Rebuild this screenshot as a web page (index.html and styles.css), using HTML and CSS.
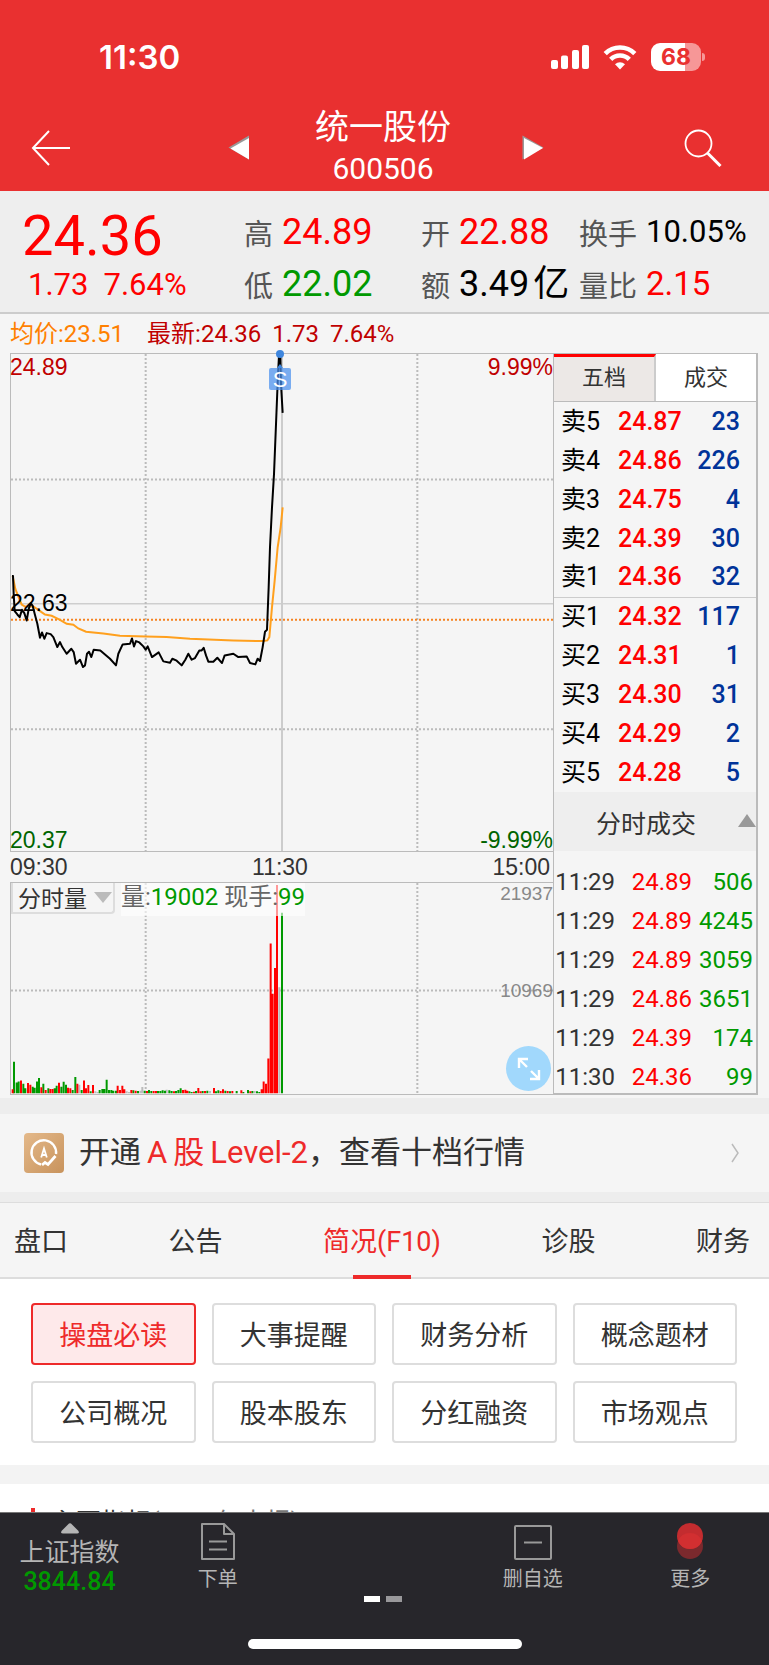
FILE: index.html
```html
<!DOCTYPE html>
<html lang="zh-CN">
<head>
<meta charset="utf-8">
<meta name="viewport" content="width=device-width, initial-scale=1">
<title>统一股份 600506</title>
<link rel="stylesheet" href="styles.css">
</head>
<body>
<div class="app">
  <header class="header">
    <div class="status">
      <time class="clock">11:30</time>
      <div class="status-icons">
        <svg width="38" height="25" viewBox="0 0 38 25" fill="#fff" aria-hidden="true"><rect x="0" y="15" width="7" height="9" rx="2"/><rect x="10" y="10.500" width="7" height="13.500" rx="2"/><rect x="21" y="5" width="7" height="19" rx="2"/><rect x="31" y="0" width="7" height="24" rx="2"/></svg>
        <svg class="wifi" width="34" height="25" viewBox="0 0 34 25" fill="none" stroke="#fff" stroke-width="4.600" aria-hidden="true"><path d="M2.200 8.600a21 21 0 0 1 29.600 0"/><path d="M7.700 14.400a13.200 13.200 0 0 1 18.600 0"/><path d="M17 24.500l-5-5.200a7.200 7.200 0 0 1 10 0z" fill="#fff" stroke="none"/></svg>
        <div class="battery">68</div>
      </div>
    </div>
    <nav class="nav">
      <button class="icon-btn" aria-label="返回"><svg width="40" height="36" viewBox="0 0 40 36" fill="none" stroke="#fff" stroke-width="2"><path d="M18 1L2 18l16 17M2 18h37"/></svg></button>
      <button class="icon-btn prev" aria-label="上一只"><svg width="22" height="25" viewBox="0 0 22 25"><path d="M21 0.500v24L0.500 12.500z" fill="#999"/><path d="M21 3v21.500L2.500 13.500z" fill="#fff"/></svg></button>
      <div class="title"><h1>统一股份</h1><span>600506</span></div>
      <button class="icon-btn next" aria-label="下一只"><svg width="22" height="25" viewBox="0 0 22 25"><path d="M0.500 0.500v24L21.500 12.500z" fill="#999"/><path d="M2 3v21.500L21 13z" fill="#fff"/></svg></button>
      <button class="icon-btn" aria-label="搜索"><svg width="38" height="38" viewBox="0 0 38 38" fill="none" stroke="#fff"><circle cx="14.500" cy="14.500" r="13" stroke-width="1.800"/><path d="M23.500 24l13 13" stroke-width="3"/></svg></button>
    </nav>
  </header>

  <main class="main">
    <section class="quote">
      <div class="last"><strong>24.36</strong><span>1.73</span><span>7.64%</span></div>
      <dl class="stat"><dt>高</dt><dd class="up">24.89</dd><dt>低</dt><dd class="down">22.02</dd></dl>
      <dl class="stat"><dt>开</dt><dd class="up">22.88</dd><dt>额</dt><dd>3.49<span class="unit">亿</span></dd></dl>
      <dl class="stat"><dt>换手</dt><dd class="small">10.05%</dd><dt>量比</dt><dd class="up mid">2.15</dd></dl>
    </section>

    <section class="trend">
      <div class="legend"><span class="avg">均价:23.51</span><span>最新:24.36</span><span>1.73</span><span>7.64%</span></div>
      <div class="board">
        <div class="charts">
          <div class="price-chart">
            <svg viewBox="33 39 1626 1494" preserveAspectRatio="none" aria-hidden="true">
              <path class="dots" d="M33 416H1659M33 1167H1659M437 39V1533M1252 39V1533"/>
              <path class="rule" d="M33 790H1659"/>
              <path class="rule noon" d="M846 39V1533"/>
              <path class="base" d="M33 838H1659"/>
              <path class="line-avg" d="M38 706L46 745 55 768 65 792 75 798 100 798 115 808 135 822 155 826 180 838 200 850 220 853 235 864 258 874 310 879 360 886 437 888 500 890 570 895 700 900 790 902 802 900 808 890 816 800 824 720 833 620 842 560 848 500"/>
              <path class="line-price" d="M36 706L39 706 41 760 44 812 52 822 59 830 66 808 73 818 80 840 86 806 92 788 98 796 104 820 112 850 120 892 126 876 133 895 140 878 152 881 160 890 172 920 180 905 187 920 200 940 214 925 221 935 228 970 240 958 249 980 255 975 261 940 267 934 274 950 281 928 301 930 315 942 330 955 348 975 355 940 368 912 390 910 396 894 402 918 408 902 418 906 430 918 437 928 443 918 456 950 476 936 490 963 510 967 517 955 530 961 545 975 556 958 565 940 575 958 585 953 598 930 605 930 611 922 618 945 625 964 640 964 652 952 666 968 674 945 700 940 715 950 740 948 750 968 766 972 773 955 780 962 788 920 795 874 801 868 806 740 810 620 816 500 822 400 828 250 834 100 837 44 841 44 843 130 848 216"/>
            </svg>
            <span class="lab tl">24.89</span><span class="lab tr">9.99%</span>
            <span class="lab ml">22.63</span>
            <span class="lab bl">20.37</span><span class="lab br">-9.99%</span>
            <span class="marker">S</span>
          </div>
          <div class="times"><span>09:30</span><span>11:30</span><span>15:00</span></div>
          <div class="vol-chart">
            <svg viewBox="33 306 1626 636" preserveAspectRatio="none" aria-hidden="true">
              <path class="dots" d="M33 630H1659M437 306V942M1252 306V942"/>
              <path class="bar g3" d="M238 940V914M286 940V934M293 940V936M380 940V934M387 940V936M427 940V921M421 940V932M500 940V929M630 940V933M764 940V933M838 940V620"/>
              <path class="bar g1" d="M42 940V845M50 940V907M56 940V904M70 940V911M76 940V925M98 940V920M104 940V923M111 940V904M117 940V894M130 940V911M145 940V925M164 940V925M170 940V917M184 940V920M191 940V905M198 940V914M218 940V930M226 940V891M245 940V930M272 940V934M299 940V930M307 940V927M313 940V927M320 940V899M327 940V930M334 940V930M340 940V932M348 940V932M400 940V931M414 940V933M434 940V932M447 940V930M454 940V933M474 940V933M481 940V933M488 940V931M495 940V932M508 940V931M515 940V933M528 940V933M535 940V930M542 940V925M568 940V934M575 940V936M588 940V933M608 940V933M622 940V932M648 940V934M655 940V931M676 940V932M690 940V934M710 940V933M730 940V936M744 940V930M757 940V933M771 940V934M778 940V936"/>
              <path class="bar r1" d="M38 940V928M63 940V901M84 940V909M91 940V914M124 940V922M137 940V930M151 940V927M158 940V927M177 940V908M204 940V923M211 940V925M232 940V911M252 940V901M258 940V925M265 940V915M279 940V915M353 940V917M360 940V930M367 940V917M373 940V928M394 940V930M407 940V932M441 940V933M461 940V933M468 940V933M522 940V934M549 940V930M556 940V929M562 940V932M582 940V935M595 940V924M602 940V934M615 940V933M642 940V924M662 940V933M669 940V928M683 940V933M697 940V933M724 940V931M751 940V934M785 940V928M791 940V904M798 940V911M805 940V835M812 940V488M818 940V640M825 940V562M831 940V312"/>
              <path class="bar g1" d="M846 940V396"/>
            </svg>
            <div class="vol-tools">
              <label class="picker"><select aria-label="指标"><option>分时量</option></select></label>
              <div class="vol-read">量:<b>19002</b> 现手:<b>99</b></div>
            </div>
            <span class="lab vol tr">21937</span><span class="lab vol mr">10969</span>
            <button class="expand" aria-label="全屏"><svg width="24" height="24" viewBox="0 0 24 24" fill="none" stroke="#fff" stroke-width="2.400"><path d="M2 11V2h9M2 2l8 8M22 13v9h-9M22 22l-8-8"/></svg></button>
          </div>
        </div>

        <aside class="book">
          <div class="book-tabs"><button class="on">五档</button><button>成交</button></div>
          <table class="levels">
            <tbody>
              <tr><th>卖5</th><td>24.87</td><td>23</td></tr>
              <tr><th>卖4</th><td>24.86</td><td>226</td></tr>
              <tr><th>卖3</th><td>24.75</td><td>4</td></tr>
              <tr><th>卖2</th><td>24.39</td><td>30</td></tr>
              <tr><th>卖1</th><td>24.36</td><td>32</td></tr>
            </tbody>
            <tbody class="bids">
              <tr><th>买1</th><td>24.32</td><td>117</td></tr>
              <tr><th>买2</th><td>24.31</td><td>1</td></tr>
              <tr><th>买3</th><td>24.30</td><td>31</td></tr>
              <tr><th>买4</th><td>24.29</td><td>2</td></tr>
              <tr><th>买5</th><td>24.28</td><td>5</td></tr>
            </tbody>
          </table>
          <button class="ticks-head"><span>分时成交</span><i class="tri-up"></i></button>
          <table class="ticks">
            <tbody>
              <tr><td>11:29</td><td>24.89</td><td>506</td></tr>
              <tr><td>11:29</td><td>24.89</td><td>4245</td></tr>
              <tr><td>11:29</td><td>24.89</td><td>3059</td></tr>
              <tr><td>11:29</td><td>24.86</td><td>3651</td></tr>
              <tr><td>11:29</td><td>24.39</td><td>174</td></tr>
              <tr><td>11:30</td><td>24.36</td><td>99</td></tr>
            </tbody>
          </table>
        </aside>
      </div>
    </section>

    <a class="promo" href="#level2">
      <svg width="40" height="40" viewBox="0 0 40 40" aria-hidden="true"><defs><linearGradient id="gold" x1="0" y1="0" x2="1" y2="1"><stop offset="0" stop-color="#e4b98a"/><stop offset="1" stop-color="#c8935c"/></linearGradient></defs><rect width="40" height="40" rx="4" fill="url(#gold)"/><g fill="none" stroke="#fff" stroke-width="2.400"><path d="M17 31.500A12.300 12.300 0 1 1 32 21"/><path d="M18 32l3-2.500 3 2L31.500 23" stroke-width="2.800"/><path d="M17.200 24.500L20 15.500l2.800 9M18 22h4" stroke-width="1.800"/></g></svg>
      <span>开通<em><i>A</i>股<i>Level-2</i></em>，查看十档行情</span>
      <svg class="chev" width="8" height="20" viewBox="0 0 8 20" fill="none" stroke="#bbb" stroke-width="1.500" aria-hidden="true"><path d="M1 1l6 9-6 9"/></svg>
    </a>

    <nav class="tabs"><a href="#a">盘口</a><a href="#b">公告</a><a href="#c" class="on">简况(F10)</a><a href="#d">诊股</a><a href="#e">财务</a></nav>

    <section class="chips">
      <button class="on">操盘必读</button><button>大事提醒</button><button>财务分析</button><button>概念题材</button>
      <button>公司概况</button><button>股本股东</button><button>分红融资</button><button>市场观点</button>
    </section>

    <section class="metrics"><h2>主要指标<small>(2025年中报)</small></h2></section>
  </main>

  <footer class="footer">
    <div class="dock">
      <a class="index" href="#sh"><svg width="18" height="11" viewBox="0 0 18 11" fill="#b5b5b5" aria-hidden="true"><path d="M8 .500q1-.600 2 0L17.500 8q1 2.500-1.500 2.500H2Q-.500 10.500.500 8z"/></svg><span>上证指数</span><b>3844.84</b></a>
      <a class="item" href="#order"><svg width="36" height="38" viewBox="0 0 36 38" fill="none" stroke="#999" stroke-width="2" stroke-linejoin="round" aria-hidden="true"><path d="M24 1H2v35h32V11L24 1v10h10M9 18.500h18M9 26.500h18"/></svg><span>下单</span></a>
      <div class="item"></div>
      <a class="item" href="#remove"><svg width="38" height="38" viewBox="0 0 38 38" fill="none" stroke="#999" stroke-width="2" aria-hidden="true"><rect x="1" y="3" width="36" height="33" rx="1"/><path d="M10 19.500h18"/></svg><span>删自选</span></a>
      <a class="item" href="#more"><svg width="28" height="38" viewBox="0 0 28 38" aria-hidden="true"><circle cx="14" cy="23" r="13" fill="#7b292d"/><circle cx="14" cy="13" r="13" fill="#c32c2f"/><path d="M2 18a13 13 0 0 1 24 0A13 13 0 0 1 2 18z" fill="#d22f31"/></svg><span>更多</span></a>
    </div>
    <div class="pager"><i class="on"></i><i></i></div>
    <div class="home"></div>
  </footer>
</div>
</body>
</html>
```

FILE: styles.css
```css
* { box-sizing: border-box; }
body, h1, h2, dl, dd { margin: 0; }
body { font-family: Roboto, "Noto Sans CJK SC", sans-serif; color: #333; background: #eee; }
button { font: inherit; color: inherit; background: none; border: 0; padding: 0; }
a { color: inherit; text-decoration: none; }
svg { display: block; flex: none; }
.app { display: flex; flex-direction: column; height: 100vh; overflow: hidden; }

.header { background: #e93030; color: #fff; padding: 36px 0 0; }
.status { display: flex; justify-content: space-between; align-items: center; height: 42px; padding: 0 68px 0 99px; }
.clock { font: 600 33px/42px Inter, sans-serif; }
.status-icons { display: flex; align-items: center; gap: 14px; }
.battery { position: relative; width: 50px; height: 28px; border-radius: 9px; background: linear-gradient(90deg, #fff 68%, #f69797 68%); color: #e93030; font: 700 23px/28px Inter, sans-serif; text-align: center; }
.battery::after { content: ""; position: absolute; left: 51px; top: 10px; width: 3px; height: 8px; border-radius: 0 4px 4px 0; background: #f69797; }
.nav { display: flex; align-items: center; justify-content: space-between; height: 113px; padding: 26px 47px 0 31px; }
.icon-btn.prev { margin-left: 92px; }
.icon-btn.next { margin-right: 75px; }
.title { display: flex; flex-direction: column; align-items: center; padding-right: 6px; }
.title h1 { font-size: 34px; font-weight: 400; line-height: 42px; }
.title span { font-size: 30px; line-height: 42px; }

.main { flex: 1; min-height: 0; overflow: hidden; }
.quote { display: grid; grid-template-columns: 220fr 177fr 158fr 190fr; height: 123px; padding: 15px 0 0 24px; background: #eee; border-bottom: 2px solid #ccc; }
.last { display: flex; flex-wrap: wrap; align-content: flex-start; gap: 0 15px; color: #f00; padding-left: 4px; font-size: 31px; line-height: 38px; }
.last strong { flex: 0 0 100%; margin-left: -6px; font-size: 56px; line-height: 60px; font-weight: 400; }
.stat { display: grid; grid-template-columns: max-content 1fr; grid-auto-rows: 52px; align-items: center; column-gap: 9px; white-space: nowrap; }
.stat dt { font-size: 29px; color: #555; }
.stat dd { font-size: 36px; line-height: 52px; color: #000; }
.stat dd.small { font-size: 31px; }
.stat dd.mid { font-size: 33px; }
.unit { margin-left: 4px; }
.stat .up { color: #f00; }
.stat .down { color: #090; }

.trend { background: #f5f5f5; padding: 0 11px 3px 10px; }
.legend { display: flex; gap: 11px; height: 39px; font-size: 24px; line-height: 41px; color: #c00000; }
.legend .avg { color: #ff8000; margin-right: 12px; }
.board { display: grid; grid-template-columns: minmax(0, 1fr) 205px; }
.charts { display: flex; flex-direction: column; font-family: "Liberation Sans", "Noto Sans CJK SC", sans-serif; }
.price-chart, .vol-chart { position: relative; border: 1px solid #bbb; border-right: 0; }
.price-chart { height: 499px; }
.vol-chart { flex: 1; min-height: 210px; }
.price-chart svg { width: 100%; height: 100%; }
.vol-chart > svg { position: absolute; width: 100%; height: 100%; }
.charts path { fill: none; vector-effect: non-scaling-stroke; }
.dots { stroke: #bbb; stroke-width: 2px; stroke-dasharray: 2 2; }
.rule { stroke: #bbb; stroke-width: 1px; }
.noon { stroke: #ccc; stroke-width: 2px; }
.base { stroke: #f58220; stroke-width: 2px; stroke-dasharray: 2 2; }
.line-avg { stroke: #ffa01e; stroke-width: 2px; }
.line-price { stroke: #000; stroke-width: 2px; stroke-linejoin: round; }
.bar { stroke-width: 2px; }
.g1 { stroke: #090; }
.r1 { stroke: #f00; }
.g3 { stroke: #bbb; }
.lab { position: absolute; font-size: 23px; line-height: 26px; }
.tl, .tr { top: 0; color: #c00000; }
.tl, .ml, .bl { left: -1px; }
.tr, .mr, .br { right: 0; }
.ml { top: 236px; color: #000; }
.bl, .br { bottom: -2px; color: #006400; }
.lab.vol { font-size: 19px; color: #888; }
.vol.tr { top: -2px; }
.mr { top: 95px; }
.marker { position: absolute; left: calc(50% - 13px); top: 14px; width: 22px; height: 22px; border-radius: 2px; background: rgba(74, 144, 238, .72); color: #fff; font-size: 22px; line-height: 23px; text-align: center; }
.marker::before { content: ""; position: absolute; left: 7px; top: -18px; width: 8px; height: 8px; border-radius: 50%; background: #3f86dd; }
.marker::after { content: ""; position: absolute; left: 8px; top: -4px; border: 3px solid transparent; border-top: 0; border-bottom: 4px solid #3f86dd; }
.times { display: flex; justify-content: space-between; height: 30px; padding-right: 3px; font-size: 23px; line-height: 30px; }
.vol-tools { position: absolute; left: 0; top: 0; display: flex; gap: 6px; }
.picker { position: relative; width: 104px; height: 31px; border: 2px solid #ddd; border-top: 0; border-radius: 0 0 4px 0; background: #f5f5f5; }
.picker select { appearance: none; width: 100%; height: 100%; border: 0; padding: 0 0 0 5px; background: none; font: 23px/29px "Noto Sans CJK SC", sans-serif; color: #333; }
.picker::after { content: ""; position: absolute; right: 1px; top: 9px; border: 9px solid transparent; border-top: 11px solid #bbb; border-bottom: 0; pointer-events: none; }
.vol-read { height: 33px; font: 24px/29px Roboto, "Noto Sans CJK SC", sans-serif; color: #666; background: rgba(255, 255, 255, .6); white-space: nowrap; }
.vol-read b { font-weight: 400; color: #090; }
.expand { position: absolute; right: 2px; bottom: 3px; display: grid; place-items: center; width: 45px; height: 45px; border-radius: 50%; background: #a1d8fc; }

.book { border: 1px solid #bbb; border-width: 1px 2px 2px 1px; font-size: 25px; }
.book-tabs { display: flex; height: 48px; border-bottom: 1px solid #bbb; }
.book-tabs button { flex: 1; background: #fff; font-size: 22px; padding-bottom: 5px; }
.book-tabs .on { border-top: 3px solid #f00; border-right: 2px solid #ccc; background: #ece8e6; padding-bottom: 8px; }
.book table { width: 100%; border-collapse: collapse; table-layout: fixed; }
.book tr { height: 39px; }
.book th, .book td { padding: 0; line-height: 38px; }
.levels th { width: 64px; padding-left: 7px; font-weight: 400; text-align: left; color: #000; font-size: 25px; }
.levels th + td { width: 70px; font-weight: 500; color: #f00; }
.levels td:last-child { padding-right: 16px; text-align: right; font-weight: 500; color: #003399; }
.levels .bids { border-top: 1px solid #ccc; }
.ticks-head { position: relative; display: block; width: 100%; height: 59px; background: #eee; text-align: center; padding-right: 18px; }
.tri-up { position: absolute; right: 0; top: 22px; border: 9px solid transparent; border-top: 0; border-bottom: 13px solid #999; }
.book .ticks { margin: 11px 0 -3px; }
.ticks td { text-align: right; font-size: 24px; }
.ticks td:nth-child(1) { width: 61px; }
.ticks td:nth-child(2) { width: 77px; color: #f00; }
.ticks td:nth-child(3) { padding-right: 3px; color: #090; }

.promo { display: flex; align-items: center; height: 94px; padding: 0 30px 0 24px; border-top: 16px solid #ededed; background: #f5f5f5; font-size: 31px; }
.promo span { flex: 1; margin-left: 15px; line-height: 42px; white-space: nowrap; }
.promo em, .promo i { font-style: normal; color: #ee2a2a; }
.promo i { margin: 0 6px; }
.promo i:last-child { margin-right: 0; }
.tabs { display: flex; justify-content: space-between; height: 87px; padding: 0 19px 0 14px; border-top: 10px solid #ededed; border-bottom: 2px solid #ddd; background: #f5f5f5; font-size: 27px; line-height: 80px; box-shadow: inset 0 1px #ddd; }
.tabs a { position: relative; }
.tabs .on { color: #ee2a2a; }
.tabs .on::after { content: ""; position: absolute; left: 50%; margin-left: -29px; bottom: -2px; width: 58px; height: 4px; background: #ee2a2a; }
.chips { display: grid; grid-template-columns: repeat(4, 1fr); gap: 16px; padding: 24px 32px 22px 31px; background: #fff; }
.chips button { height: 62px; border: 2px solid #ddd; border-radius: 4px; padding-bottom: 2px; font-size: 27px; }
.chips .on { border-color: #ee2a2a; background: #fee9ea; color: #ee2a2a; }
.metrics { border-top: 19px solid #f3f3f3; background: #fff; padding: 18px 31px; }
.metrics h2 { font-size: 25px; font-weight: 400; line-height: 42px; padding-left: 20px; background: linear-gradient(#ee2a2a, #ee2a2a) 0 6px / 4px 28px no-repeat; }
.metrics small { font-size: 25px; font-weight: 400; color: #777; }

.footer { position: relative; height: 153px; padding-top: 10px; background: #27262b; border-top: 1px solid #777; color: #b5b5b5; }
.dock { display: grid; grid-template-columns: 139px repeat(4, 1fr); height: 73px; }
.index, .item { display: flex; flex-direction: column; align-items: center; }
.index span { font-size: 25px; line-height: 38px; }
.index b { font-size: 25px; line-height: 20px; font-weight: 500; color: #090; }
.item { gap: 6px; font-size: 20px; line-height: 24px; }
.pager { display: flex; justify-content: center; gap: 6px; padding-right: 4px; }
.pager i { width: 16px; height: 6px; background: #99989b; }
.pager .on { background: #fff; }
.home { width: 274px; height: 10px; margin: 37px auto 0; border-radius: 5px; background: #fff; }
```
